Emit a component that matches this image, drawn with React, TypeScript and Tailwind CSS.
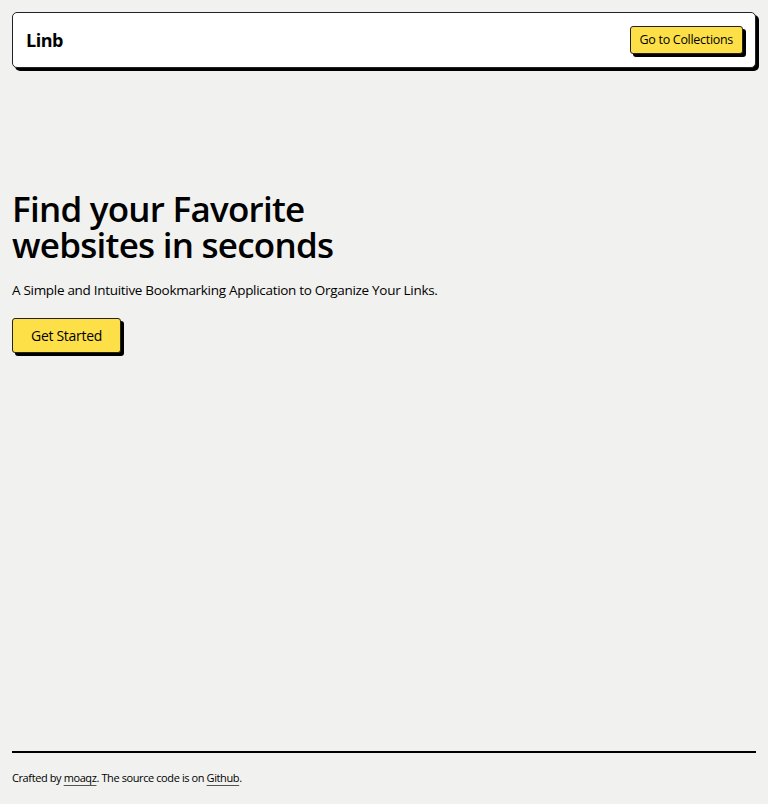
import React from "react";

export default function App() {
  return (
    <div
      className="min-h-screen flex flex-col bg-[#f1f2ef] text-black px-3 pt-3"
      style={{ fontFamily: '"Open Sans", "Noto Sans", sans-serif' }}
    >
      <header className="h-[56px] flex items-center justify-between bg-white border border-[#222] rounded-[5px] shadow-[3px_3px_0_0_#000] pl-[13px] pr-[12px]">
        <span className="text-[18px] font-bold tracking-[-0.5px]">Linb</span>
        <button className="h-[28px] px-[9px] bg-[#fde047] border border-[#222] rounded-[3px] shadow-[3px_3px_0_0_#000] text-[12.5px] tracking-[-0.3px]">
          Go to Collections
        </button>
      </header>

      <main className="flex-1 pt-[123px]">
        <h1 className="text-[35px] leading-[36px] font-semibold tracking-[-0.75px]">
          <span className="block">Find your Favorite</span>
          <span className="block">websites in seconds</span>
        </h1>
        <p className="mt-[17px] text-[13.5px] tracking-[-0.3px]">
          A Simple and Intuitive Bookmarking Application to Organize Your Links.
        </p>
        <button className="mt-[18px] h-[35px] w-[109px] bg-[#fde047] border border-[#222] rounded-[3px] shadow-[3px_3px_0_0_#000] text-[14px] tracking-[-0.3px]">
          Get Started
        </button>
      </main>

      <footer className="border-t-2 border-black mt-auto h-[53px] flex items-center">
        <p className="text-[11px] tracking-[-0.4px]">
          Crafted by{" "}
          <a className="underline decoration-[#555] underline-offset-[3px]">moaqz</a>. The source code is on{" "}
          <a className="underline decoration-[#555] underline-offset-[3px]">Github</a>.
        </p>
      </footer>
    </div>
  );
}
